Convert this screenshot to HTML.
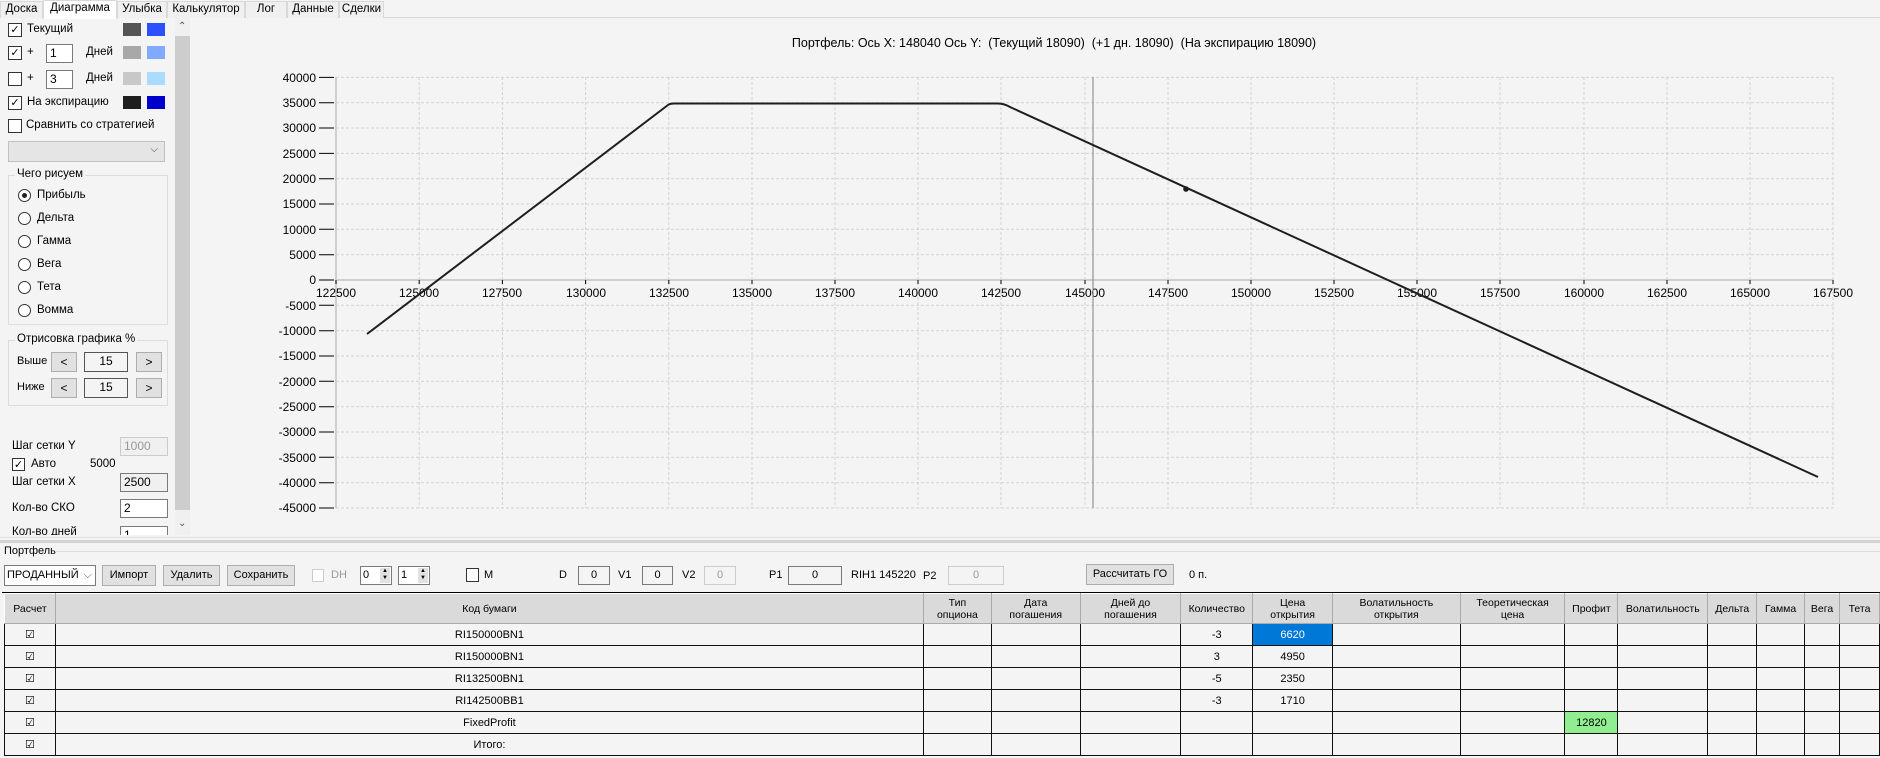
<!DOCTYPE html>
<html><head><meta charset="utf-8"><style>
*{box-sizing:border-box;margin:0;padding:0}
body{width:1880px;height:758px;background:#f4f4f4;font-family:"Liberation Sans",sans-serif;font-size:12px;color:#000;position:relative;overflow:hidden}
.a{position:absolute;white-space:nowrap}
.tab{position:absolute;top:1px;height:17px;border:1px solid #d9d9d9;border-bottom:none;background:#f0f0f0;text-align:center;line-height:15px;font-size:11.5px}
.cb{position:absolute;width:14px;height:14px;border:1px solid #333;background:#fff;font-size:11px;line-height:12px;text-align:center}
.rb{position:absolute;width:13px;height:13px;border:1px solid #333;border-radius:50%;background:#fff}
.tb{position:absolute;border:1px solid #7a7a7a;background:#fff;font-size:12px;padding-left:3px;line-height:17px}
.btn{position:absolute;border:1px solid #adadad;background:#e1e1e1;text-align:center;font-size:12px}
.grp{position:absolute;border:1px solid #dcdcdc}
.grp span{position:absolute;top:-8px;left:6px;background:#f4f4f4;padding:0 2px}
.lp{font-size:11.5px}
table{position:absolute;left:4px;top:593px;border-collapse:collapse;font-size:11px;table-layout:fixed}
td,th{border:1px solid #111;text-align:center;height:22px;padding:0;overflow:hidden;white-space:nowrap}
th{background:#dadada;font-weight:normal;height:30px;border-color:#fff #aaa #aaa #fff;line-height:12px;font-size:10.5px}
</style></head><body>
<!-- tabs -->
<div class="a" style="left:0;top:17px;width:1880px;height:1px;background:#d9d9d9"></div>
<div class="tab" style="left:0;width:43px">Доска</div>
<div class="tab" style="left:43px;top:0;width:74px;height:19px;background:#fff">Диаграмма</div>
<div class="tab" style="left:117px;width:50px">Улыбка</div>
<div class="tab" style="left:167px;width:78px">Калькулятор</div>
<div class="tab" style="left:245px;width:42px">Лог</div>
<div class="tab" style="left:287px;width:52px">Данные</div>
<div class="tab" style="left:339px;width:45px">Сделки</div>

<!-- left panel -->
<div class="lp">
<div class="cb" style="left:8px;top:23px">✓</div><div class="a" style="left:27px;top:23px">Текущий</div>
<div class="a" style="left:123px;top:23px;width:18px;height:13px;background:#555"></div><div class="a" style="left:147px;top:23px;width:18px;height:13px;background:#2a50ff"></div>
<div class="cb" style="left:8px;top:46px">✓</div><div class="a" style="left:27px;top:46px">+</div>
<div class="tb" style="left:46px;top:44px;width:27px;height:19px">1</div><div class="a" style="left:86px;top:46px">Дней</div>
<div class="a" style="left:123px;top:46px;width:18px;height:13px;background:#a8a8a8"></div><div class="a" style="left:147px;top:46px;width:18px;height:13px;background:#80aaff"></div>
<div class="cb" style="left:8px;top:72px"></div><div class="a" style="left:27px;top:72px">+</div>
<div class="tb" style="left:46px;top:70px;width:27px;height:19px">3</div><div class="a" style="left:86px;top:72px">Дней</div>
<div class="a" style="left:123px;top:72px;width:18px;height:13px;background:#c8c8c8"></div><div class="a" style="left:147px;top:72px;width:18px;height:13px;background:#aadcff"></div>
<div class="cb" style="left:8px;top:96px">✓</div><div class="a" style="left:27px;top:96px">На экспирацию</div>
<div class="a" style="left:123px;top:96px;width:18px;height:13px;background:#1e1e1e"></div><div class="a" style="left:147px;top:96px;width:18px;height:13px;background:#0000cc"></div>
<div class="cb" style="left:8px;top:119px"></div><div class="a" style="left:26px;top:119px">Сравнить со стратегией</div>
<div class="a" style="left:8px;top:141px;width:157px;height:21px;border:1px solid #c0c0c0;background:#e5e5e5"><span class="a" style="right:6px;top:2px;font-size:10px;color:#444">⌵</span></div>
<div class="grp" style="left:8px;top:175px;width:160px;height:150px"><span>Чего рисуем</span></div>
<div class="rb" style="left:18px;top:189px"><div style="position:absolute;left:3px;top:3px;width:5px;height:5px;border-radius:50%;background:#222"></div></div><div class="a" style="left:37px;top:189px">Прибыль</div>
<div class="rb" style="left:18px;top:212px"></div><div class="a" style="left:37px;top:212px">Дельта</div>
<div class="rb" style="left:18px;top:235px"></div><div class="a" style="left:37px;top:235px">Гамма</div>
<div class="rb" style="left:18px;top:258px"></div><div class="a" style="left:37px;top:258px">Вега</div>
<div class="rb" style="left:18px;top:281px"></div><div class="a" style="left:37px;top:281px">Тета</div>
<div class="rb" style="left:18px;top:304px"></div><div class="a" style="left:37px;top:304px">Вомма</div>
<div class="grp" style="left:8px;top:340px;width:160px;height:66px"><span>Отрисовка графика %</span></div>
<div class="a" style="left:17px;top:355px;font-size:11px">Выше</div>
<div class="btn" style="left:51px;top:352px;width:26px;height:20px;line-height:18px">&lt;</div>
<div class="tb" style="left:84px;top:352px;width:44px;height:20px;border-color:#555;text-align:center;padding:0;background:#f4f4f4">15</div>
<div class="btn" style="left:136px;top:352px;width:26px;height:20px;line-height:18px">&gt;</div>
<div class="a" style="left:17px;top:381px;font-size:11px">Ниже</div>
<div class="btn" style="left:51px;top:378px;width:26px;height:20px;line-height:18px">&lt;</div>
<div class="tb" style="left:84px;top:378px;width:44px;height:20px;border-color:#555;text-align:center;padding:0;background:#f4f4f4">15</div>
<div class="btn" style="left:136px;top:378px;width:26px;height:20px;line-height:18px">&gt;</div>
<div class="a" style="left:12px;top:440px">Шаг сетки Y</div>
<div class="tb" style="left:120px;top:437px;width:48px;height:19px;border-color:#ccc;background:#f0f0f0;color:#999">1000</div>
<div class="cb" style="left:12px;top:458px;width:13px;height:13px">✓</div><div class="a" style="left:31px;top:458px">Авто</div><div class="a" style="left:90px;top:458px">5000</div>
<div class="a" style="left:12px;top:476px">Шаг сетки X</div>
<div class="tb" style="left:120px;top:473px;width:48px;height:19px;background:#f0f0f0">2500</div>
<div class="a" style="left:12px;top:502px">Кол-во СКО</div>
<div class="tb" style="left:120px;top:499px;width:48px;height:19px">2</div>
<div class="a" style="left:0;top:526px;width:175px;height:9px;overflow:hidden"><div class="a" style="left:12px;top:0">Кол-во дней</div><div class="tb" style="left:120px;top:0;width:48px;height:19px">1</div></div>
</div>
<!-- scrollbar -->
<div class="a" style="left:175px;top:18px;width:15px;height:517px;background:#f0f0f0"></div>
<div class="a" style="left:175px;top:36px;width:15px;height:474px;background:#cdcdcd"></div>
<div class="a" style="left:178px;top:21px;font-size:10px;color:#555">⌃</div>
<div class="a" style="left:178px;top:518px;font-size:10px;color:#555">⌄</div>
<!-- splitter -->
<div class="a" style="left:0;top:537px;width:1880px;height:1px;background:#e0e0e0"></div>
<div class="a" style="left:0;top:540px;width:1880px;height:3px;background:#d4d4d4"></div>

<!-- chart -->
<svg class="a" style="left:0;top:0" width="1880" height="540" font-family="Liberation Sans, sans-serif" font-size="12">
<text x="1054" y="47" text-anchor="middle" font-size="12.5" xml:space="preserve" style="white-space:pre">Портфель: Ось X: 148040 Ось Y:  (Текущий 18090)  (+1 дн. 18090)  (На экспирацию 18090)</text>
<g stroke="#d2d2d2" stroke-dasharray="3,2" fill="none">
<path d="M336 77.4H1833M336 102.7H1833M336 128H1833M336 153.4H1833M336 178.7H1833M336 204H1833M336 229.3H1833M336 254.7H1833M336 305.3H1833M336 330.7H1833M336 356H1833M336 381.3H1833M336 406.7H1833M336 432H1833M336 457.3H1833M336 482.7H1833M336 508H1833"/>
<path d="M419.2 77V508M502.4 77V508M585.6 77V508M668.8 77V508M752 77V508M835 77V508M918 77V508M1001 77V508M1085 77V508M1168 77V508M1251 77V508M1334 77V508M1417 77V508M1500 77V508M1584 77V508M1667 77V508M1750 77V508M1833 77V508"/>
</g>
<path d="M336 280H1833" stroke="#cfcfcf" stroke-width="2"/>
<path d="M336 77V508" stroke="#cfcfcf" stroke-width="2"/>
<g stroke="#000">
<path d="M319 77.4H334M319 102.7H334M319 128H334M319 153.4H334M319 178.7H334M319 204H334M319 229.3H334M319 254.7H334M319 280H334M319 305.3H334M319 330.7H334M319 356H334M319 381.3H334M319 406.7H334M319 432H334M319 457.3H334M319 482.7H334M319 508H334"/>
<path d="M336 280v4M419.2 280v4M502.4 280v4M585.6 280v4M668.8 280v4M752 280v4M835 280v4M918 280v4M1001 280v4M1085 280v4M1168 280v4M1251 280v4M1334 280v4M1417 280v4M1500 280v4M1584 280v4M1667 280v4M1750 280v4M1833 280v4"/>
</g>
<g text-anchor="end">
<text x="316" y="82">40000</text><text x="316" y="107">35000</text><text x="316" y="132">30000</text><text x="316" y="158">25000</text><text x="316" y="183">20000</text><text x="316" y="208">15000</text><text x="316" y="234">10000</text><text x="316" y="259">5000</text><text x="316" y="284">0</text><text x="316" y="310">-5000</text><text x="316" y="335">-10000</text><text x="316" y="360">-15000</text><text x="316" y="386">-20000</text><text x="316" y="411">-25000</text><text x="316" y="436">-30000</text><text x="316" y="462">-35000</text><text x="316" y="487">-40000</text><text x="316" y="512">-45000</text>
</g>
<g text-anchor="middle">
<text x="336" y="297">122500</text><text x="419" y="297">125000</text><text x="502" y="297">127500</text><text x="586" y="297">130000</text><text x="669" y="297">132500</text><text x="752" y="297">135000</text><text x="835" y="297">137500</text><text x="918" y="297">140000</text><text x="1001" y="297">142500</text><text x="1085" y="297">145000</text><text x="1168" y="297">147500</text><text x="1251" y="297">150000</text><text x="1334" y="297">152500</text><text x="1417" y="297">155000</text><text x="1500" y="297">157500</text><text x="1584" y="297">160000</text><text x="1667" y="297">162500</text><text x="1750" y="297">165000</text><text x="1833" y="297">167500</text>
</g>
<path d="M1093 77V508" stroke="#808080" stroke-width="1"/>
<path d="M367 334L668 105Q670 103.5 674 103.5H998Q1004 103.5 1010 107L1818 477" stroke="#1e1e1e" stroke-width="2" fill="none"/>
<circle cx="1186" cy="189" r="2.8" fill="#1e1e1e"/>
</svg>

<!-- portfolio -->
<div class="a" style="left:4px;top:545px;font-size:11px">Портфель</div>
<div class="a" style="left:55px;top:551px;width:1825px;height:1px;background:#dcdcdc"></div>
<div class="a" style="left:4px;top:565px;width:92px;height:21px;border:1px solid #7a7a7a;background:#fff;font-size:11px;line-height:19px;padding-left:2px;overflow:hidden">ПРОДАННЫЙ<span class="a" style="right:3px;top:0;background:#fff;color:#555">⌵</span></div>
<div class="btn" style="left:102px;top:565px;width:54px;height:21px;line-height:19px;font-size:11px">Импорт</div>
<div class="btn" style="left:163px;top:565px;width:57px;height:21px;line-height:19px;font-size:11px">Удалить</div>
<div class="btn" style="left:227px;top:565px;width:68px;height:21px;line-height:19px;font-size:11px">Сохранить</div>
<div class="cb" style="left:312px;top:569px;width:12px;height:13px;border-color:#ccc"></div><div class="a" style="left:331px;top:569px;color:#999;font-size:11px">DH</div>
<div class="tb" style="left:360px;top:566px;width:32px;height:19px;font-size:11px;padding-left:2px">0<span class="a" style="right:1px;top:1px;width:10px;height:15px;background:#e1e1e1;font-size:6px;line-height:7px;text-align:center">▲<br>▼</span></div>
<div class="tb" style="left:398px;top:566px;width:32px;height:19px;font-size:11px;padding-left:2px">1<span class="a" style="right:1px;top:1px;width:10px;height:15px;background:#e1e1e1;font-size:6px;line-height:7px;text-align:center">▲<br>▼</span></div>
<div class="cb" style="left:466px;top:568px;width:13px;height:14px"></div><div class="a" style="left:484px;top:569px;font-size:11px">M</div>
<div class="a" style="left:559px;top:569px;font-size:11px">D</div><div class="tb" style="left:578px;top:566px;width:32px;height:19px;text-align:center;padding:0;font-size:11px;background:#f4f4f4">0</div>
<div class="a" style="left:618px;top:569px;font-size:11px">V1</div><div class="tb" style="left:642px;top:566px;width:31px;height:19px;text-align:center;padding:0;font-size:11px;background:#f4f4f4">0</div>
<div class="a" style="left:682px;top:569px;font-size:11px">V2</div><div class="tb" style="left:704px;top:566px;width:32px;height:19px;text-align:center;padding:0;font-size:11px;border-color:#ccc;color:#999;background:#f4f4f4">0</div>
<div class="a" style="left:769px;top:569px;font-size:11px">P1</div><div class="tb" style="left:788px;top:566px;width:54px;height:19px;text-align:center;padding:0;font-size:11px;background:#f4f4f4">0</div>
<div class="a" style="left:851px;top:569px;font-size:11px">RIH1 145220</div>
<div class="a" style="left:923px;top:570px;font-size:11px">P2</div><div class="tb" style="left:948px;top:566px;width:56px;height:19px;text-align:center;padding:0;font-size:11px;border-color:#ccc;color:#999;background:#f4f4f4">0</div>
<div class="btn" style="left:1086px;top:564px;width:88px;height:21px;line-height:19px;font-size:11px">Рассчитать ГО</div>
<div class="a" style="left:1189px;top:569px;font-size:11px">0 п.</div>
<div class="a" style="left:2px;top:592px;width:1878px;height:1px;background:#000"></div>

<table>
<colgroup><col style="width:51px"><col style="width:873px"><col style="width:68px"><col style="width:89px"><col style="width:101px"><col style="width:72px"><col style="width:80px"><col style="width:128px"><col style="width:105px"><col style="width:53px"><col style="width:90px"><col style="width:49px"><col style="width:48px"><col style="width:35px"><col style="width:40px"></colgroup>
<tr><th>Расчет</th><th>Код бумаги</th><th>Тип<br>опциона</th><th>Дата<br>погашения</th><th>Дней до<br>погашения</th><th>Количество</th><th>Цена<br>открытия</th><th>Волатильность<br>открытия</th><th>Теоретическая<br>цена</th><th>Профит</th><th>Волатильность</th><th>Дельта</th><th>Гамма</th><th>Вега</th><th>Тета</th></tr>
<tr><td>☑</td><td>RI150000BN1</td><td></td><td></td><td></td><td>-3</td><td style="background:#0078d7;color:#fff">6620</td><td></td><td></td><td></td><td></td><td></td><td></td><td></td><td></td></tr>
<tr><td>☑</td><td>RI150000BN1</td><td></td><td></td><td></td><td>3</td><td>4950</td><td></td><td></td><td></td><td></td><td></td><td></td><td></td><td></td></tr>
<tr><td>☑</td><td>RI132500BN1</td><td></td><td></td><td></td><td>-5</td><td>2350</td><td></td><td></td><td></td><td></td><td></td><td></td><td></td><td></td></tr>
<tr><td>☑</td><td>RI142500BB1</td><td></td><td></td><td></td><td>-3</td><td>1710</td><td></td><td></td><td></td><td></td><td></td><td></td><td></td><td></td></tr>
<tr><td>☑</td><td>FixedProfit</td><td></td><td></td><td></td><td></td><td></td><td></td><td></td><td style="background:#90ee90">12820</td><td></td><td></td><td></td><td></td><td></td></tr>
<tr><td>☑</td><td>Итого:</td><td></td><td></td><td></td><td></td><td></td><td></td><td></td><td></td><td></td><td></td><td></td><td></td><td></td></tr>
</table>
</body></html>
